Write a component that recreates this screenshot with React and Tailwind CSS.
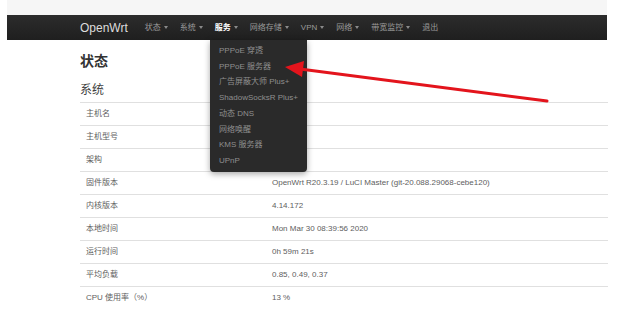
import React from 'react'

const navItems = [
    { label: '状态', caret: true },
    { label: '系统', caret: true },
    { label: '服务', caret: true, active: true },
    { label: '网络存储', caret: true },
    { label: 'VPN', caret: true },
    { label: '网络', caret: true },
    { label: '带宽监控', caret: true },
    { label: '退出', caret: false },
];

const menuItems = [
    'PPPoE 穿透',
    'PPPoE 服务器',
    '广告屏蔽大师 Plus+',
    'ShadowSocksR Plus+',
    '动态 DNS',
    '网络唤醒',
    'KMS 服务器',
    'UPnP',
];

const rows = [
    ['主机名', ''],
    ['主机型号', ''],
    ['架构', ''],
    ['固件版本', 'OpenWrt R20.3.19 / LuCI Master (git-20.088.29068-cebe120)'],
    ['内核版本', '4.14.172'],
    ['本地时间', 'Mon Mar 30 08:39:56 2020'],
    ['运行时间', '0h 59m 21s'],
    ['平均负载', '0.85, 0.49, 0.37'],
    ['CPU 使用率（%）', '13 %'],
];

export default function App() {
    return (
        <div className="relative w-[638px] h-[310px] overflow-hidden bg-white" style={{ fontFamily: '"Liberation Sans", "Noto Sans CJK SC", sans-serif' }}>
            <div className="ml-[7px] w-[600px]">
                {/* top strip */}
                <div className="h-[15px] bg-[#f6f6f6]" />

                {/* navbar */}
                <div className="h-[25px] flex items-center bg-gradient-to-b from-[#2c2c2c] to-[#1f1f1f]">
                    <span className="ml-[73px] text-[12px] text-[#dddddd] leading-none">OpenWrt</span>
                    <div className="ml-[17px] flex items-center gap-[12px] h-full">
                        {navItems.map(item => (
                            <div key={item.label} className={`flex items-center h-full text-[8px] leading-none ${item.active ? 'text-white font-bold' : 'text-[#9a9a9a]'}`}>
                                <span>{item.label}</span>
                                {item.caret && (
                                    <span className="ml-[3px] w-0 h-0 border-l-[2.5px] border-r-[2.5px] border-t-[3px] border-l-transparent border-r-transparent border-t-[#8a8a8a]" />
                                )}
                            </div>
                        ))}
                    </div>
                </div>

                {/* content */}
                <div className="pl-[73px] pt-[13px]">
                    <h1 className="text-[14px] leading-[16px] font-bold text-[#333]">状态</h1>
                    <h2 className="mt-[13px] text-[12px] leading-[16px] text-[#404040]">系统</h2>
                    <div className="mt-[4px] w-[528px]">
                        {rows.map(([label, value]) => (
                            <div key={label} className="h-[23px] flex items-center border-t border-[#e0e0e0] text-[8px] text-[#606060]">
                                <span className="w-[192px] pl-[6px]">{label}</span>
                                <span>{value}</span>
                            </div>
                        ))}
                    </div>
                </div>
            </div>

            {/* dropdown menu */}
            <div className="absolute left-[210px] top-[40px] w-[97px] pt-[3px] pb-[3px] bg-[#2a2a2a] rounded-b-[4px] shadow-[0_2px_6px_rgba(0,0,0,0.35)]">
                {menuItems.map(m => (
                    <div key={m} className="pl-[9px] text-[8px] leading-[15.7px] text-[#8f8f8f] whitespace-nowrap">{m}</div>
                ))}
            </div>

            {/* red arrow */}
            <svg className="absolute left-0 top-0 pointer-events-none" width="638" height="310" viewBox="0 0 638 310">
                <line x1="547" y1="101" x2="300" y2="69" stroke="#e3141c" strokeWidth="3" strokeLinecap="round" />
                <polygon points="285,67 304,61 302,77" fill="#e3141c" />
            </svg>
        </div>
    )
}
